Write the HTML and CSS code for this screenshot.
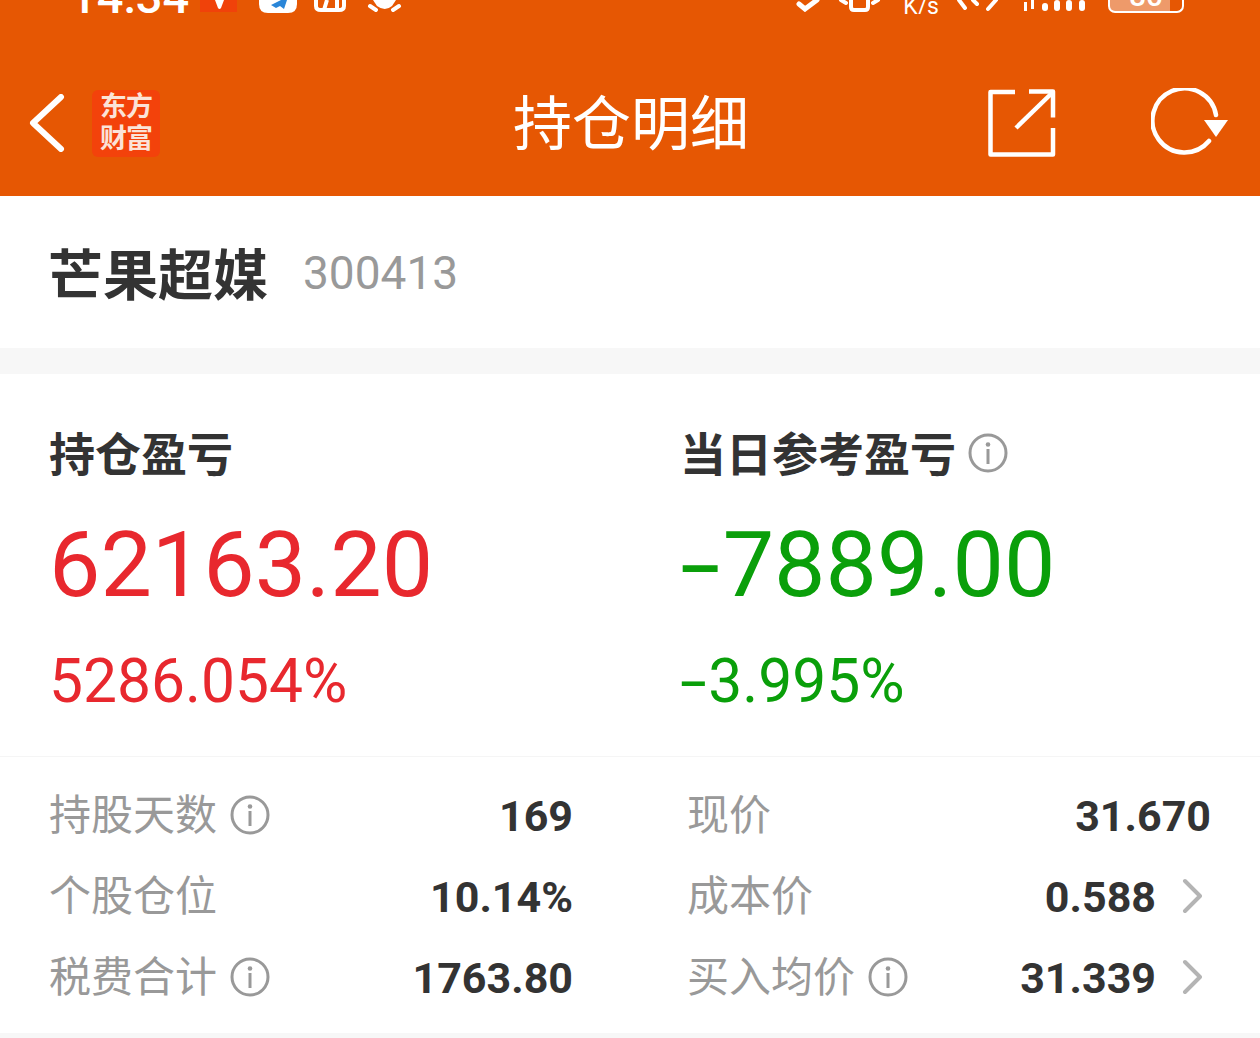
FILE: index.html
```html
<!DOCTYPE html>
<html lang="zh-CN">
<head>
  <meta charset="UTF-8">
  <meta name="viewport" content="width=device-width, initial-scale=1.0">
  <title>持仓明细</title>
  <link rel="stylesheet" href="styles.css">
</head>
<body>
  <svg width="0" height="0" class="defs">
    <symbol id="i-info" viewBox="0 0 40 40">
      <circle cx="20" cy="20" r="18" fill="none" stroke="#999" stroke-width="3"/>
      <circle cx="20" cy="11.500" r="2.300" fill="#999"/>
      <rect x="18.500" y="16" width="3" height="15" fill="#999"/>
    </symbol>
    <symbol id="i-more" viewBox="0 0 20 36">
      <path d="M3 3l15 15L3 33" fill="none" stroke="#b4b4b4" stroke-width="4" stroke-linecap="round" stroke-linejoin="round"/>
    </symbol>
  </svg>

  <header class="top">
    <div class="status">
      <span class="time">14:34</span>
      <svg class="st-tag" width="37" height="12" viewBox="0 0 37 12"><rect width="37" height="12" fill="#f0420a"/><path d="M15 0h9l-3 8q-1.500 2-3 0z" fill="#fff"/></svg>
      <svg class="st-app" width="38" height="13" viewBox="0 0 38 13"><path d="M0 0h38v4q0 9-9 9H9q-9 0-9-9z" fill="#fff"/><path d="M12 5l10-5h6l-3 9-4-3-4 2z" fill="#2a86d8"/></svg>
      <svg class="st-msg" width="34" height="12" viewBox="0 0 34 12" fill="none" stroke="#fff" stroke-width="4"><path d="M3 0v6q0 4 5 4h18q5 0 5-4V0"/><path d="M14 0l-3 10M24 0v10"/></svg>
      <svg class="st-bug" width="35" height="12" viewBox="0 0 35 12"><path d="M6 0h23l-4 6q-7 6-15 0z" fill="#fff"/><path d="M3 6l6 4M32 6l-6 4" stroke="#fff" stroke-width="4" stroke-linecap="round"/></svg>
      <span class="spacer"></span>
      <svg class="st-bt" width="25" height="12" viewBox="0 0 25 12" fill="none" stroke="#fff" stroke-width="5" stroke-linecap="round"><path d="M3 4l6 5 12-9"/></svg>
      <svg class="st-bell" width="43" height="12" viewBox="0 0 43 12" fill="none" stroke="#fff" stroke-width="4" stroke-linecap="round"><path d="M3 0l5 3M40 0l-5 3M13 0v7q0 3 3 3h11q3 0 3-3V0"/></svg>
      <span class="speed">K/s</span>
      <svg class="st-wifi" width="43" height="12" viewBox="0 0 43 12" fill="none" stroke="#fff" stroke-width="4" stroke-linecap="round"><path d="M3 0l6 8M17 0l4 4M40 0l-8 9"/></svg>
      <svg class="st-sig" width="70" height="12" viewBox="0 0 70 12" fill="#fff"><path d="M3 2h3v9H3zM10 0h3v9h-3z"/><rect x="21" y="3" width="6" height="8" rx="3"/><rect x="33" y="0" width="6" height="11" rx="3"/><rect x="45" y="0" width="6" height="11" rx="3"/><rect x="58" y="0" width="6" height="11" rx="3"/></svg>
      <div class="battery"><span class="batt-num">80</span></div>
    </div>
    <div class="bar">
      <svg class="back" width="36" height="58" viewBox="0 0 36 58" fill="none" stroke="#fff" stroke-width="6" stroke-linecap="round" stroke-linejoin="round"><path d="M32 3L4 29l28 26"/></svg>
      <div class="logo"><span>东方</span><span>财富</span></div>
      <h1 class="title">持仓明细</h1>
      <svg class="share" width="68" height="68" viewBox="0 0 68 68" fill="none" stroke="#fff" stroke-width="4.500" stroke-linejoin="round"><path d="M27 3H2.500v62.500h62.500V39"/><path d="M28 39L65 3"/><path d="M41 2.500h24v26"/></svg>
      <svg class="refresh" width="78" height="70" viewBox="0 0 78 70" fill="none"><path d="M58 53A32 32 0 1 1 65 27" stroke="#fff" stroke-width="4.500" stroke-linecap="round"/><path d="M53 32h24L65 49z" fill="#fff"/></svg>
    </div>
  </header>

  <section class="stock">
    <span class="stock-name">芒果超媒</span>
    <span class="stock-code">300413</span>
  </section>

  <section class="summary">
    <div class="pl">
      <div class="pl-col">
        <h2 class="pl-label">持仓盈亏</h2>
        <div class="pl-num red">62163.20</div>
        <div class="pl-pct red">5286.054%</div>
      </div>
      <div class="pl-col">
        <h2 class="pl-label">当日参考盈亏 <svg class="info"><use href="#i-info"/></svg></h2>
        <div class="pl-num green"><span class="minus">-</span>7889.00</div>
        <div class="pl-pct green"><span class="minus">-</span>3.995%</div>
      </div>
    </div>
    <div class="details">
      <div class="col">
        <div class="row"><span class="key">持股天数 <svg class="info"><use href="#i-info"/></svg></span><b class="val">169</b></div>
        <div class="row"><span class="key">个股仓位</span><b class="val">10.14%</b></div>
        <div class="row"><span class="key">税费合计 <svg class="info"><use href="#i-info"/></svg></span><b class="val">1763.80</b></div>
      </div>
      <div class="col">
        <div class="row"><span class="key">现价</span><b class="val">31.670</b></div>
        <div class="row"><span class="key">成本价</span><b class="val">0.588</b><svg class="more"><use href="#i-more"/></svg></div>
        <div class="row"><span class="key">买入均价 <svg class="info"><use href="#i-info"/></svg></span><b class="val">31.339</b><svg class="more"><use href="#i-more"/></svg></div>
      </div>
    </div>
  </section>
</body>
</html>
```

FILE: styles.css
```css
html, body {
  margin: 0;
  height: 1038px;
  overflow: hidden;
}
body {
  background: #f7f7f7;
  font-family: Roboto, "Noto Sans CJK SC", sans-serif;
  color: #333;
}
h1, h2 {
  margin: 0;
  font-weight: normal;
}
.defs {
  display: block;
  height: 0;
}

/* header */
.top {
  height: 196px;
  background: #e65703;
  color: #fff;
}
.status {
  height: 14px;
  display: flex;
  align-items: flex-start;
  overflow: hidden;
  padding: 0 76px 0 70px;
}
.status svg {
  flex: none;
  display: block;
}
.spacer {
  flex: 1;
}
.time {
  font-size: 47px;
  font-weight: 500;
  line-height: 14px;
  height: 14px;
  margin-top: -10px;
  width: 130px;
}
.st-app { margin-left: 22px; }
.st-msg { margin-left: 16px; }
.st-bug { margin-left: 20px; }
.st-bt { margin-right: 17px; }
.speed {
  font-size: 23px;
  line-height: 14px;
  margin-left: 22px;
  margin-top: 0;
}
.st-wifi { margin-left: 17px; }
.st-sig { margin-left: 22px; }
.battery {
  width: 72px;
  height: 11px;
  margin-left: 17px;
  border: 2px solid #fff;
  border-top: 0;
  border-radius: 0 0 7px 7px;
  background: linear-gradient(to right, #ee9a6a 84%, transparent 84%);
  text-align: center;
  overflow: hidden;
}
.batt-num {
  font-size: 30px;
  font-weight: 500;
  line-height: 10px;
  display: block;
  margin-top: -9px;
}
.bar {
  height: 182px;
  display: flex;
  align-items: center;
  padding: 36px 31px 0 29px;
  box-sizing: border-box;
}
.bar svg {
  flex: none;
}
.logo {
  width: 68px;
  height: 67px;
  margin-left: 27px;
  background: #f3420b;
  border-radius: 6px;
  display: flex;
  flex-direction: column;
  align-items: center;
  justify-content: center;
  font-size: 27px;
  font-weight: bold;
  line-height: 32px;
  letter-spacing: -1px;
  color: #fbe3d8;
}
.title {
  flex: 1;
  padding-left: 114px;
  margin-top: 4px;
  text-align: center;
  font-size: 59px;
  line-height: 70px;
}
.bar .refresh {
  margin-left: 95px;
}

/* stock name */
.stock {
  height: 152px;
  background: #fff;
  display: flex;
  align-items: center;
  padding-left: 48px;
}
.stock-name {
  font-size: 55px;
  font-weight: bold;
  color: #333;
  padding-bottom: 2px;
}
.stock-code {
  margin: 2px 0 0 35px;
  font-size: 46px;
  color: #999;
}

/* summary */
.summary {
  margin-top: 26px;
  height: 659px;
  background: #fff;
}
.pl {
  height: 383px;
  box-sizing: border-box;
  padding: 51px 0 0 49px;
  display: flex;
  border-bottom: 1px solid #f5f5f5;
}
.pl-col {
  flex: none;
  width: 631px;
}
.pl-label {
  display: flex;
  align-items: center;
  gap: 12px;
  font-size: 46px;
  font-weight: bold;
  line-height: 60px;
  color: #333;
}
.pl-label .info {
  margin-top: -4px;
}
.pl-num {
  margin-top: 25px;
  font-size: 91.500px;
  line-height: 110px;
}
.pl-pct {
  margin-top: 27px;
  font-size: 60.500px;
  line-height: 70px;
}
/* the minus in the reference is much wider than the font's hyphen */
.minus {
  display: inline-block;
  transform: scaleX(1.6);
  transform-origin: left center;
  margin-right: 0.19em;
}
.red { color: #e8282e; }
.green { color: #0a9f0a; }

.details {
  display: flex;
  padding: 17px 0 0 49px;
}
.col {
  width: 524px;
}
.col + .col {
  margin-left: 114px;
}
.row {
  height: 81px;
  display: flex;
  align-items: center;
}
.key {
  flex: 1;
  display: flex;
  align-items: center;
  gap: 13px;
  font-size: 42px;
  color: #999;
  padding-bottom: 6px;
}
.key .info {
  margin-top: 6px;
}
.val {
  font-size: 43px;
  font-weight: bold;
  color: #333;
  padding-top: 2px;
}
.more {
  flex: none;
  width: 20px;
  height: 36px;
  margin: 0 9px 0 26px;
}
.info {
  flex: none;
  width: 40px;
  height: 40px;
}
```
